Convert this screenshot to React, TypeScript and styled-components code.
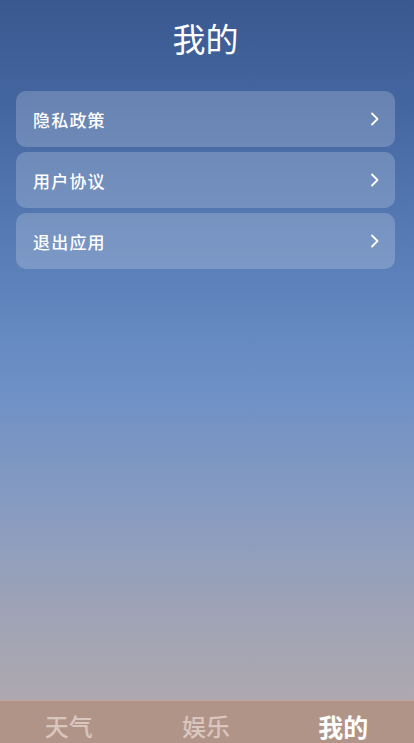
import React from 'react'
import styled, { createGlobalStyle } from 'styled-components'

const GlobalStyle = createGlobalStyle`
	html, body {
		margin: 0;
		padding: 0;
	}
	body {
		font-family: 'Noto Sans CJK SC', 'Noto Sans', sans-serif;
	}
`

const Screen = styled.div`
	width: 414px;
	height: 743px;
	display: flex;
	flex-direction: column;
	overflow: hidden;
	background: linear-gradient(
		180deg,
		#3a5890 0%,
		#4466a0 14%,
		#5f84bd 40%,
		#6d90c6 52%,
		#8a9cc0 70%,
		#9ea3b6 82%,
		#aea8b0 94%
	);
`

const Content = styled.main`
	flex: 1;
	display: flex;
	flex-direction: column;
	padding: 0 19px 0 16px;
`

const Title = styled.h1`
	margin: 0;
	height: 91px;
	display: flex;
	align-items: center;
	justify-content: center;
	padding-bottom: 16px;
	box-sizing: border-box;
	color: #fff;
	font-size: 33px;
	font-weight: 400;
`

const List = styled.div`
	display: flex;
	flex-direction: column;
	gap: 5px;
`

const Row = styled.div`
	height: 56px;
	display: flex;
	align-items: center;
	justify-content: space-between;
	padding: 0 15px 0 17px;
	border-radius: 10px;
	background: rgba(255, 255, 255, 0.2);
	color: #fff;
	font-size: 17px;
	font-weight: 500;
	letter-spacing: 1.2px;
`

const Chevron = () => (
	<svg width="10" height="14" viewBox="0 0 10 14" fill="none">
		<path d="M2 1.5 L7.5 7 L2 12.5" stroke="#fff" strokeWidth="1.8" strokeLinecap="round" strokeLinejoin="round" />
	</svg>
)

const TabBar = styled.nav`
	height: 43px;
	display: grid;
	grid-template-columns: repeat(3, 1fr);
	padding: 0 2px 0 0;
	background: #b09488;
	border-top: 1px solid #c4a49a;
	box-sizing: border-box;
`

const Tab = styled.div<{ $active?: boolean }>`
	display: flex;
	align-items: center;
	justify-content: center;
	padding-top: 8px;
	line-height: 26px;
	font-size: ${({ $active }) => ($active ? 25 : 24)}px;
	font-weight: ${({ $active }) => ($active ? 700 : 500)};
	color: ${({ $active }) => ($active ? '#ffffff' : '#d9c6bf')};
`

const items = ['隐私政策', '用户协议', '退出应用']
const tabs = ['天气', '娱乐', '我的']

export default function App() {
	return (
		<>
			<GlobalStyle />
			<Screen>
				<Content>
					<Title>我的</Title>
					<List>
						{items.map((item) => (
							<Row key={item}>
								<span>{item}</span>
								<Chevron />
							</Row>
						))}
					</List>
				</Content>
				<TabBar>
					{tabs.map((tab, i) => (
						<Tab key={tab} $active={i === 2}>
							{tab}
						</Tab>
					))}
				</TabBar>
			</Screen>
		</>
	)
}
